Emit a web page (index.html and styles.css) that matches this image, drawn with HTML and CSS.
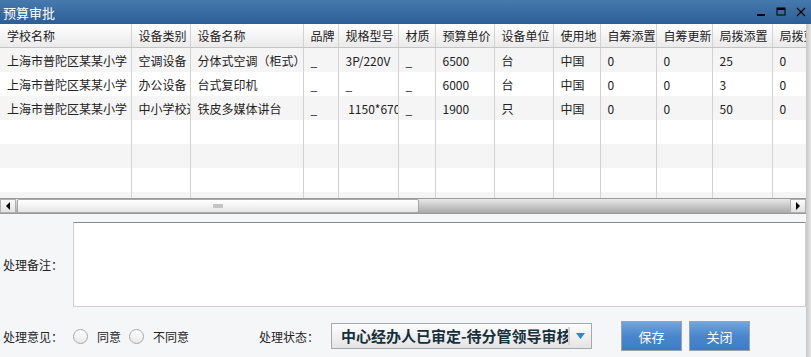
FILE: index.html
```html
<!DOCTYPE html>
<html lang="zh-CN">
<head>
  <meta charset="UTF-8">
  <title>预算审批</title>
  <link rel="stylesheet" href="styles.css">
</head>
<body>
  <div class="window">
    <div class="titlebar">
      <span class="title">预算审批</span>
      <div class="ctrls">
        <svg width="10" height="10" viewBox="0 0 10 10"><rect x="1" y="7" width="8" height="2" fill="#000"/></svg>
        <svg width="10" height="10" viewBox="0 0 10 10"><rect x="1" y="1" width="8" height="7" fill="none" stroke="#000" stroke-width="1"/><rect x="1" y="1" width="8" height="2" fill="#000"/></svg>
        <svg width="10" height="10" viewBox="0 0 10 10"><path d="M1 1 L9 9 M9 1 L1 9" stroke="#000" stroke-width="1.2"/></svg>
      </div>
    </div>

    <div class="content">
      <div class="main">
        <div class="grid">
          <table>
            <colgroup>
              <col style="width:131px"><col style="width:59px"><col style="width:113px"><col style="width:35px">
              <col style="width:60px"><col style="width:37px"><col style="width:59px"><col style="width:59px">
              <col style="width:47px"><col style="width:56px"><col style="width:56px"><col style="width:60px">
              <col style="width:60px">
            </colgroup>
            <thead>
              <tr>
                <th>学校名称</th><th>设备类别</th><th>设备名称</th><th>品牌</th><th>规格型号</th><th>材质</th>
                <th>预算单价</th><th>设备单位</th><th>使用地</th><th>自筹添置</th><th>自筹更新</th><th>局拨添置</th><th>局拨更新</th>
              </tr>
            </thead>
            <tbody>
              <tr class="alt">
                <td>上海市普陀区某某小学</td><td>空调设备</td><td>分体式空调（柜式）</td><td>_</td><td>3P/220V</td><td>_</td>
                <td>6500</td><td>台</td><td>中国</td><td>0</td><td>0</td><td>25</td><td>0</td>
              </tr>
              <tr>
                <td>上海市普陀区某某小学</td><td>办公设备</td><td>台式复印机</td><td>_</td><td>_</td><td>_</td>
                <td>6000</td><td>台</td><td>中国</td><td>0</td><td>0</td><td>3</td><td>0</td>
              </tr>
              <tr class="alt">
                <td>上海市普陀区某某小学</td><td>中小学校通用</td><td>铁皮多媒体讲台</td><td>_</td><td>&nbsp;1150*670</td><td>_</td>
                <td>1900</td><td>只</td><td>中国</td><td>0</td><td>0</td><td>50</td><td>0</td>
              </tr>
              <tr><td></td><td></td><td></td><td></td><td></td><td></td><td></td><td></td><td></td><td></td><td></td><td></td><td></td></tr>
              <tr class="alt"><td></td><td></td><td></td><td></td><td></td><td></td><td></td><td></td><td></td><td></td><td></td><td></td><td></td></tr>
              <tr><td></td><td></td><td></td><td></td><td></td><td></td><td></td><td></td><td></td><td></td><td></td><td></td><td></td></tr>
              <tr class="alt"><td></td><td></td><td></td><td></td><td></td><td></td><td></td><td></td><td></td><td></td><td></td><td></td><td></td></tr>
            </tbody>
          </table>
        </div>

        <div class="hscroll">
          <div class="sbtn"><svg width="6" height="8" viewBox="0 0 6 8"><path d="M5 0 L1 4 L5 8 Z" fill="#000"/></svg></div>
          <div class="thumb"><span class="grip"></span></div>
          <div class="track"></div>
          <div class="sbtn"><svg width="6" height="8" viewBox="0 0 6 8"><path d="M1 0 L5 4 L1 8 Z" fill="#000"/></svg></div>
        </div>

        <div class="form">
          <div class="remark-row">
            <label class="lbl">处理备注：</label>
            <textarea class="remark"></textarea>
          </div>
          <div class="action-row">
            <span class="lbl">处理意见：</span>
            <label class="radio"><span class="dot"></span>同意</label>
            <label class="radio"><span class="dot"></span>不同意</label>
            <span class="lbl state-lbl">处理状态：</span>
            <div class="select">
              <span class="select-text">中心经办人已审定-待分管领导审核</span>
              <span class="select-arrow"><svg width="9" height="6" viewBox="0 0 9 6"><path d="M0 0 H9 L4.5 6 Z" fill="#1e8be6"/></svg></span>
            </div>
            <button class="btn save">保存</button>
            <button class="btn">关闭</button>
          </div>
        </div>
      </div>
      <div class="vstrip"></div>
    </div>
  </div>
</body>
</html>
```

FILE: styles.css
```css
body {
  margin: 0;
  font-family: "Noto Sans CJK SC", "Liberation Sans", sans-serif;
  font-size: 12px;
  color: #222;
  background: #f5f6f8;
  overflow: hidden;
}
.window {
  width: 811px;
  height: 357px;
}
.titlebar {
  height: 24px;
  background: linear-gradient(#4679ae, #2c5f95);
  display: flex;
  align-items: center;
  justify-content: space-between;
}
.title {
  color: #fff;
  font-size: 13px;
  padding-left: 3px;
}
.ctrls {
  display: flex;
  gap: 10px;
  padding-right: 5px;
}
.ctrls svg {
  display: block;
}
.content {
  display: flex;
  height: 333px;
}
.main {
  width: 806px;
  display: flex;
  flex-direction: column;
}
.vstrip {
  width: 5px;
  background: linear-gradient(90deg, #c8c8c8, #e4e4e4);
}
.grid {
  height: 174px;
  overflow: hidden;
  background: #fff;
}
table {
  table-layout: fixed;
  border-collapse: collapse;
  width: 831px;
}
th, td {
  padding: 0 0 0 7px;
  text-align: left;
  white-space: nowrap;
  overflow: hidden;
  text-overflow: clip;
  border-right: 1px solid #d2d2d2;
  font-weight: normal;
}
th {
  height: 23px;
  background: linear-gradient(#ffffff, #eaeaea);
  border-bottom: 1px solid #c4c4c4;
  color: #222;
}
td {
  height: 24px;
}
tr.alt td {
  background: #f5f5f5;
}
.hscroll {
  height: 14px;
  display: flex;
  border-top: 1px solid #9a9a9a;
  border-bottom: 1px solid #9a9a9a;
  background: linear-gradient(#e8e8e8, #a8a8a8);
}
.sbtn {
  width: 16px;
  display: flex;
  align-items: center;
  justify-content: center;
  background: linear-gradient(#fbfbfb, #e2e2e2);
  border: 1px solid #b0b0b0;
  box-sizing: border-box;
}
.thumb {
  width: 402px;
  margin-left: 1px;
  background: linear-gradient(#ffffff, #e6e6e6);
  border: 1px solid #a8a8a8;
  border-radius: 2px;
  box-sizing: border-box;
  display: flex;
  align-items: center;
  justify-content: center;
}
.grip {
  width: 10px;
  height: 4px;
  background: #c4c4c4;
}
.track {
  flex: 1;
}
.form {
  flex: 1;
  background: #f5f6f8;
}
.remark-row {
  display: flex;
  align-items: center;
  margin-top: 8px;
}
.lbl {
  width: 73px;
  padding-left: 3px;
  box-sizing: border-box;
  flex: none;
}
.remark {
  width: 733px;
  height: 85px;
  box-sizing: border-box;
  border: 1px solid #d0d0d0;
  border-top: 1px solid #8a8a8a;
  background: #fff;
  resize: none;
  margin: 0;
}
.action-row {
  display: flex;
  align-items: center;
  margin-top: 14px;
}
.radio {
  display: flex;
  align-items: center;
  margin-right: 8px;
}
.dot {
  width: 13px;
  height: 13px;
  border-radius: 50%;
  border: 1px solid #a8a8a8;
  background: linear-gradient(#ffffff, #e8e8e8);
  margin-right: 9px;
}
.state-lbl {
  width: auto;
  margin-left: 62px;
  padding-left: 0;
  margin-right: 12px;
}
.select {
  width: 261px;
  height: 26px;
  box-sizing: border-box;
  border: 1px solid #a8a8a8;
  background: linear-gradient(#fdfdfd, #e4e4e4);
  display: flex;
  align-items: center;
}
.select-text {
  flex: 1;
  overflow: hidden;
  white-space: nowrap;
  font-size: 15px;
  font-weight: bold;
  color: #15303c;
  padding-left: 9px;
  border-right: 2px solid #d4d4d4;
  height: 18px;
  line-height: 18px;
}
.select-arrow {
  width: 21px;
  display: flex;
  justify-content: center;
}
.btn {
  width: 61px;
  height: 30px;
  margin-left: 29px;
  border: 1px solid #9aa4b0;
  background: linear-gradient(#6ea6e0, #4a86cc 50%, #3f7cc6);
  color: #fff;
  font-family: inherit;
  font-size: 13px;
  padding: 0;
}
.btn + .btn {
  margin-left: 7px;
}
```
